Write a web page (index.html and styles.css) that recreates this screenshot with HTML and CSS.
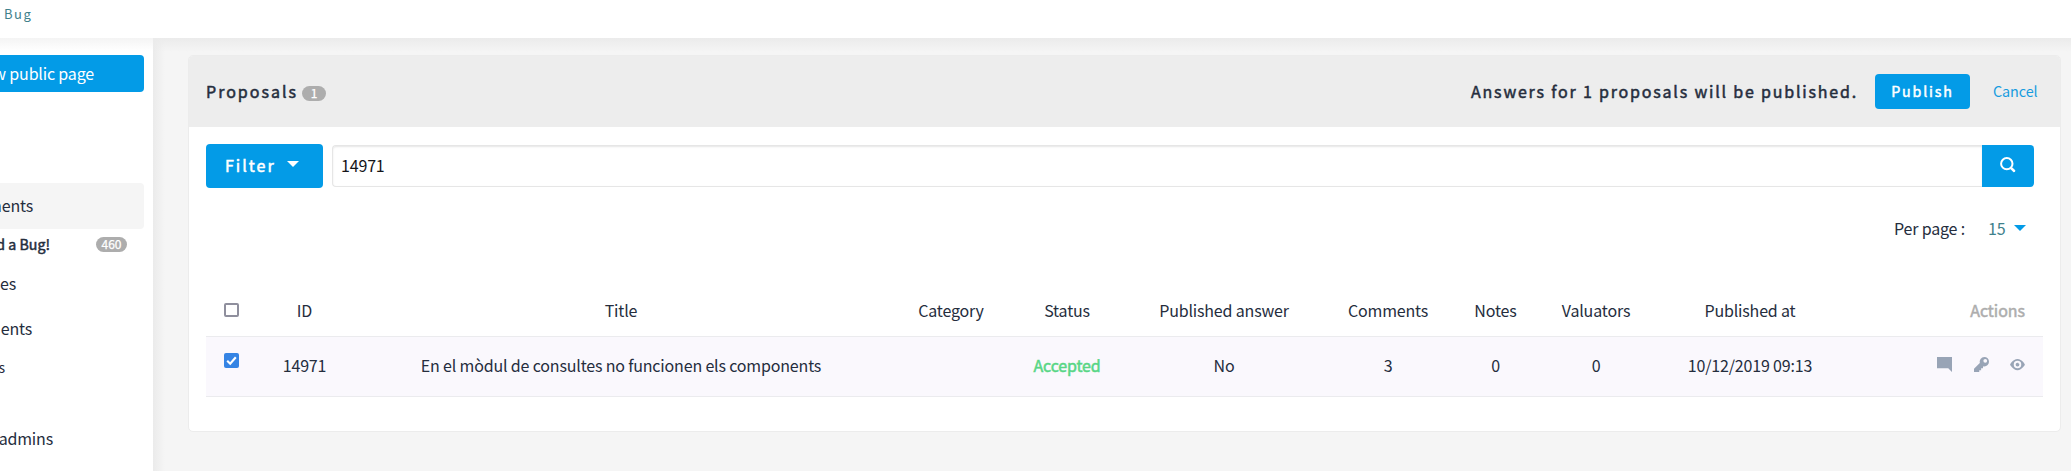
FILE: index.html
```
<!DOCTYPE html>
<html lang="en">
<head>
<meta charset="utf-8">
<title>Proposals</title>
<link rel="stylesheet" href="styles.css">
</head>
<body>
<header class="topbar"><a class="crumb">Bug</a></header>
<div class="layout">
  <nav class="sidebar">
    <a class="public-btn"><span>w public page</span></a>
    <a class="nav-item active"><span>ments</span></a>
    <a class="nav-sub strong"><span>d a Bug!</span><b class="badge count">460</b></a>
    <a class="nav-item es">es</a>
    <a class="nav-item ents">ents</a>
    <a class="nav-sub small">s</a>
    <a class="nav-item admins">admins</a>
  </nav>
  <main class="main">
    <section class="card">
      <div class="card-head">
        <h2 class="title">Proposals</h2><b class="badge one">1</b>
        <span class="notice">Answers for 1 proposals will be published.</span>
        <button class="publish">Publish</button>
        <a class="cancel">Cancel</a>
      </div>
      <div class="card-body">
        <div class="filters">
          <button class="filter"><span>Filter</span><i class="caret"></i></button>
          <div class="input">14971</div>
          <button class="search"><svg width="16" height="16" viewBox="0 0 16 16"><ellipse cx="6.800" cy="6.700" rx="5.700" ry="5.600" fill="none" stroke="#fff" stroke-width="2"/><path d="M10 11.800l1.800-1.700 3.500 3.200q.3 2-1.700 1.900z" fill="#fff"/></svg></button>
        </div>
        <div class="perpage"><span class="pp-label">Per page :</span><span class="pp-value">15</span><i class="caret blue"></i></div>
        <div class="row head">
          <div><i class="check"></i></div><div>ID</div><div>Title</div><div>Category</div><div>Status</div><div>Published answer</div><div>Comments</div><div>Notes</div><div>Valuators</div><div>Published at</div><div class="actions">Actions</div>
        </div>
        <div class="row item">
          <div><i class="check on"><svg width="15" height="15" viewBox="0 0 15 15"><path d="M3.2 7.8l3 3 5.6-6.6" fill="none" stroke="#fff" stroke-width="2.1"/></svg></i></div><div>14971</div><div>En el mòdul de consultes no funcionen els components</div><div></div><div class="accepted">Accepted</div><div>No</div><div>3</div><div>0</div><div>0</div><div>10/12/2019 09:13</div>
          <div class="actions icons">
            <svg width="15" height="15" viewBox="0 0 8 8"><path d="M0 0v6h6l2 2V0z"/></svg>
            <svg width="15" height="15" viewBox="0 0 8 8"><path fill-rule="evenodd" d="M5.5 0a2.5 2.5 0 0 0-2.4 3.2L0 6.300V8h2.800V7h1V6h1V4.900q.3.1.7.1a2.5 2.5 0 0 0 0-5zM6 1a1 1 0 1 1 0 2 1 1 0 0 1 0-2z"/></svg>
            <svg width="15" height="15" viewBox="0 0 8 8"><path fill-rule="evenodd" d="M4 1C1.500 1 0 4 0 4s1.500 3 4 3 4-3 4-3-1.500-3-4-3zM4 2a2 2 0 1 1 0 4 2 2 0 0 1 0-4zm0 1a1 1 0 1 0 1 1q0-.2-.1-.4a.5.5 0 0 1-.5-.5Q4.200 3 4 3z"/></svg>
          </div>
        </div>
      </div>
    </section>
  </main>
</div>
</body>
</html>
```
FILE: styles.css
```
* { box-sizing: border-box; }
body {
  margin: 0; width: 2071px; height: 471px; overflow: hidden;
  background: #f5f5f5; color: #252d3d;
  font: 16px/24px "Noto Sans CJK SC", "Noto Sans", sans-serif;
  letter-spacing: -.17px;
}
button { border: 0; padding: 0; margin: 0; font: inherit; color: #fff; background: #039be7; border-radius: 4px; }
svg, i { display: block; }
/* semibold look between the regular and bold cuts */
.strong > span, .title, .notice, .publish, .filter, .accepted, .head .actions, .badge {
  font-weight: 400; -webkit-text-stroke: .5px currentColor;
}
.topbar { height: 38px; background: #fff; padding: 2px 0 0 4px; }
.crumb { display: block; font-size: 13px; letter-spacing: 1.5px; color: #3f818c; }
.layout { display: flex; height: 433px; }
.sidebar {
  width: 153px; flex: none; padding-top: 17px; overflow: hidden;
  background: linear-gradient(#f4f4f4, #fff 13px);
}
.sidebar a { display: flex; justify-content: flex-end; white-space: nowrap; }
.public-btn { width: 144px; height: 37px; padding: 6px 50px 0 0; color: #fff; background: #039be7; border-radius: 0 4px 4px 0; }
.nav-item.active { width: 144px; height: 46px; margin-top: 91px; padding: 10px 111px 0 0; background: #f5f5f5; border-radius: 0 4px 4px 0; }
.nav-sub.strong { width: 127px; margin-top: 3px; height: 24px; font-size: 14.2px; letter-spacing: 0; align-items: center; gap: 46px; }
.nav-item.es { width: 16px; margin-top: 15px; }
.nav-item.ents { width: 32px; margin-top: 21px; }
.nav-sub.small { width: 5px; margin-top: 15px; font-size: 13.5px; }
.nav-item.admins { width: 53px; margin-top: 47px; }
.badge { display: block; flex: none; height: 15px; border-radius: 8px; background: #adadad; color: #fff; font-size: 12px; line-height: 14px; text-align: center; letter-spacing: 0; -webkit-text-stroke-width: .25px; }
.count { width: 31px; }
.main {
  flex: 1; padding: 17px 10px 0 35px;
  background: linear-gradient(#ebebeb, rgba(245,245,245,0) 14px), linear-gradient(90deg, #ebebeb, #f5f5f5 12px);
}
.card { width: 1873px; height: 377px; background: #fff; border: 1px solid #ececec; border-radius: 5px; }
.card-head { height: 71px; display: flex; align-items: center; background: #ededed; border-radius: 4px 4px 0 0; padding-left: 17px; }
.title { margin: 0; width: 96px; font-size: 16px; letter-spacing: 2px; line-height: 24px; padding-bottom: 2px; }
.one { width: 24px; margin-top: 4px; }
.notice { margin-left: auto; width: 404px; letter-spacing: 1.8px; white-space: nowrap; padding-bottom: 2px; }
.publish { width: 95px; height: 35px; font-size: 14.2px; letter-spacing: 1.85px; padding-bottom: 1px; }
.cancel { width: 90px; padding: 0 0 2px 23px; font-size: 14.4px; letter-spacing: -.1px; color: #169cdf; }
.card-body { padding: 17px 16px 0 17px; }
.filters { display: flex; align-items: center; height: 44px; }
.filter { width: 117px; height: 44px; display: flex; align-items: center; padding: 0 0 2px 19px; letter-spacing: 2px; }
.filter span { width: 62px; text-align: left; }
.caret { width: 0; height: 0; border: 6px solid transparent; border-top-color: #fff; border-bottom: 0; margin-top: -2px; }
.input { width: 1650px; height: 42px; margin-left: 9px; border: 1px solid #e6e6e6; border-radius: 4px 0 0 4px; border-right: 0; box-shadow: inset 0 1px 2px rgba(10,10,10,.1); padding: 7px 8px; color: #15151a; }
.search { width: 52px; height: 42px; border-radius: 0 4px 4px 0; padding: 0 0 3px 18px; }
.perpage { display: flex; align-items: center; height: 24px; margin-top: 28px; padding-left: 1688px; }
.pp-label { width: 94px; }
.pp-value { width: 26px; color: #3f818c; }
.caret.blue { border-top-color: #039be7; margin-top: -1px; }
.row {
  display: grid; width: 1837px; text-align: center; white-space: nowrap;
  grid-template-columns: 51px 95px 538px 122px 110px 204px 124px 91px 110px 198px 194px;
}
.head { margin-top: 58px; height: 38px; }
.item { height: 61px; padding-top: 16px; background: #faf8fd; border: 1px solid #ebebee; border-width: 1px 0; }
.check { width: 15px; height: 14px; margin: 5px 0 0 18px; border: 2px solid #8f8f9d; border-radius: 2px; }
.check.on { height: 15px; border: 0; background: #3584e4; margin-top: 0; }
.accepted { color: #57d685; }
.actions { text-align: right; padding-right: 18px; }
.head .actions { color: #adadad; letter-spacing: -.05px; }
.icons { display: flex; justify-content: flex-end; gap: 21.5px; padding-top: 4px; }
.icons svg { fill: #98a4b6; }
```
